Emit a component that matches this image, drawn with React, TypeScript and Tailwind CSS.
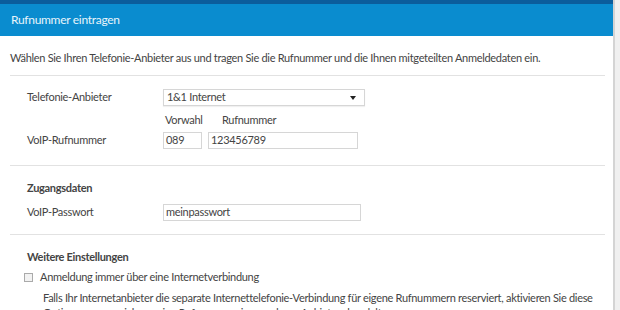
export default function App() {
  return (
    <div className="h-[310px] w-[620px] overflow-hidden bg-white text-[#444] font-['Lato',sans-serif] text-[11px] tracking-[-0.3px]">
      <div className="flex h-full">
        <div className="w-[613px]">
          {/* Header */}
          <div className="h-[4px] bg-[#0b5d9c]" />
          <div className="flex h-[32px] items-center bg-[#0a8ccf] px-[11px] text-[12px] text-[#e8f4fb]">
            Rufnummer eintragen
          </div>

          <div className="px-[10px] pr-[8px]">
            <p className="mt-[14px] h-[16px] leading-[16px]">
              Wählen Sie Ihren Telefonie-Anbieter aus und tragen Sie die Rufnummer und die Ihnen mitgeteilten Anmeldedaten ein.
            </p>
            <hr className="mt-[9px] border-t border-[#e2e2e2]" />

            <div className="pl-[17px]">
              {/* Provider */}
              <div className="mt-[13px] flex h-[17px] items-center">
                <span className="w-[136px]">Telefonie-Anbieter</span>
                <div className="flex h-[17px] w-[202px] items-center justify-between border border-[#d6d6d6] pl-[3px] pr-[8px] shadow-[0_1px_1px_rgba(0,0,0,0.06)]">
                  <span>1&amp;1 Internet</span>
                  <span className="h-0 w-0 border-x-[3px] border-t-[4px] border-x-transparent border-t-[#222]" />
                </div>
              </div>
              <div className="mt-[6px] flex h-[16px] items-center pl-[138px]">
                <span className="w-[57px]">Vorwahl</span>
                <span>Rufnummer</span>
              </div>
              <div className="mt-[4px] flex h-[17px] items-center">
                <span className="w-[136px]">VoIP-Rufnummer</span>
                <div className="flex h-[17px] w-[39px] items-center border border-[#d6d6d6] pl-[2px]">089</div>
                <div className="ml-[6px] flex h-[17px] w-[150px] items-center border border-[#d6d6d6] pl-[2px]">123456789</div>
              </div>
            </div>
            <hr className="mt-[16px] border-t border-[#e2e2e2]" />

            <div className="pl-[17px]">
              <div className="mt-[14px] h-[16px] font-bold leading-[16px]">Zugangsdaten</div>
              <div className="mt-[8px] flex h-[17px] items-center">
                <span className="w-[136px]">VoIP-Passwort</span>
                <div className="flex h-[17px] w-[198px] items-center border border-[#d6d6d6] pl-[2px]">meinpasswort</div>
              </div>
            </div>
            <hr className="mt-[13px] border-t border-[#e2e2e2]" />

            <div className="pl-[17px]">
              <div className="mt-[14px] h-[16px] font-bold leading-[16px]">Weitere Einstellungen</div>
              <div className="mt-[4px] flex h-[16px] items-center">
                <span className="ml-[-3px] h-[9px] w-[9px] border border-[#aaa] bg-[#f2f2f2]" />
                <span className="ml-[7px]">Anmeldung immer über eine Internetverbindung</span>
              </div>
              <p className="mt-[5px] pl-[16px] leading-[15px]">
                Falls Ihr Internetanbieter die separate Internettelefonie-Verbindung für eigene Rufnummern reserviert, aktivieren Sie diese Option, wenn es sich um eine Rufnummer eines anderen Anbieters handelt.
              </p>
            </div>
          </div>
        </div>
        <div className="w-[2px] bg-[#d4d4d4]" />
        <div className="flex-1 bg-[#f0f0f0]" />
      </div>
    </div>
  );
}
